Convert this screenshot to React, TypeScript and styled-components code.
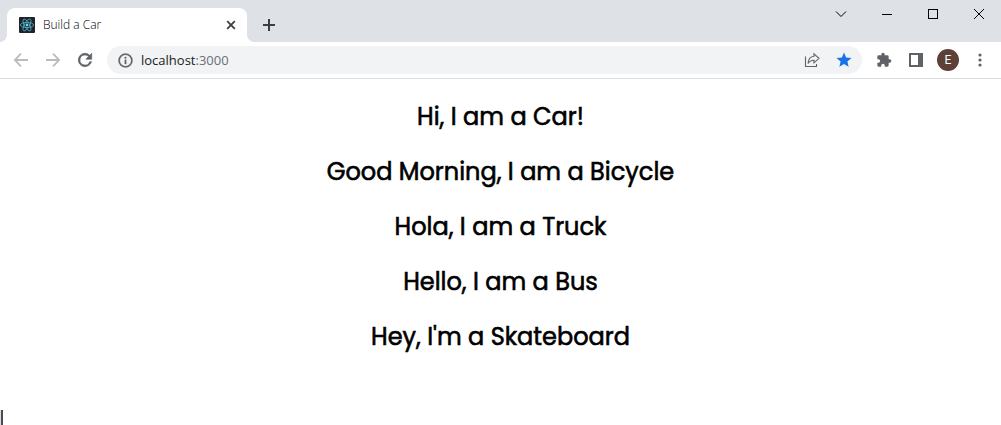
import React from 'react';
import styled, { createGlobalStyle } from 'styled-components';

const GlobalStyle = createGlobalStyle`
  * { box-sizing: border-box; }
  body { margin: 0; background: #fff; }
  button, input { font: inherit; }
`;

const Browser = styled.div`
  display: flex;
  flex-direction: column;
  min-height: 100vh;
  font-family: 'Open Sans', 'Noto Sans', sans-serif;
`;

const TabStrip = styled.header`
  display: flex;
  align-items: flex-start;
  height: 42px;
  padding-left: 7px;
  background: #dee1e6;
`;

const Tab = styled.div`
  position: relative;
  display: flex;
  align-items: center;
  gap: 8px;
  width: 240px;
  height: 34px;
  margin-top: 8px;
  padding: 0 6px 0 12px;
  border-radius: 8px 8px 0 0;
  background: #fff;

  &::before,
  &::after {
    content: '';
    position: absolute;
    bottom: 0;
    width: 8px;
    height: 8px;
  }
  &::before {
    right: 100%;
    background: radial-gradient(circle at 0 0, #dee1e6 8px, #fff 8px);
  }
  &::after {
    left: 100%;
    background: radial-gradient(circle at 100% 0, #dee1e6 8px, #fff 8px);
  }
`;

const TabTitle = styled.span`
  flex: 1;
  color: #000;
  font-size: 12px;
  font-weight: 300;
  line-height: 16px;
`;

const IconButton = styled.button<{ $size?: number; $color?: string }>`
  display: flex;
  flex: none;
  align-items: center;
  justify-content: center;
  width: ${({ $size = 32 }) => $size}px;
  height: ${({ $size = 32 }) => Math.min($size, 28)}px;
  padding: 0;
  border: 0;
  background: none;
  color: ${({ $color = '#5f6368' }) => $color};
`;

const NewTab = styled(IconButton)`
  margin: 11px 0 0 8px;
`;

const WindowControls = styled.div`
  display: flex;
  gap: 2px;
  margin-left: auto;
`;

const Toolbar = styled.nav`
  display: flex;
  align-items: center;
  height: 37px;
  padding: 0 5px;
  border-bottom: 1px solid #dadce0;
  background: #fff;
`;

const AddressBar = styled.div`
  display: flex;
  flex: 1;
  align-items: center;
  height: 28px;
  margin: 0 6px;
  padding: 0 2px;
  border-radius: 14px;
  background: #f1f3f4;
`;

const Address = styled.a`
  flex: 1;
  color: #6b6f73;
  font-size: 13px;
  line-height: 20px;
  text-decoration: none;
`;

const Host = styled.span`
  color: #202124;
`;

const Avatar = styled.span`
  display: flex;
  align-items: center;
  justify-content: center;
  width: 22px;
  height: 22px;
  border-radius: 50%;
  background: #5d4037;
  color: #fff;
  font-family: Roboto, sans-serif;
  font-size: 12px;
  line-height: 22px;
`;

const Page = styled.main`
  display: flex;
  flex: 1;
  flex-direction: column;
  align-items: center;
  padding-top: 20px;
`;

const Greeting = styled.h2`
  margin: 0 0 19px;
  color: #000;
  font-family: Poppins, Inter, sans-serif;
  font-size: 24px;
  font-weight: 400;
  line-height: 36px;
  -webkit-text-stroke: 0.025em #000;
`;

const Caret = styled.span`
  align-self: flex-start;
  width: 3px;
  height: 15px;
  margin-top: auto;
  border-left: 1px solid #dadce0;
  background: #4a4b52;
`;

const greetings = [
  'Hi, I am a Car!',
  'Good Morning, I am a Bicycle',
  'Hola, I am a Truck',
  'Hello, I am a Bus',
  "Hey, I'm a Skateboard",
];

const ReactLogo = () => (
  <svg width="16" height="16" viewBox="0 0 16 16" aria-hidden="true">
    <rect width="16" height="16" rx="1" fill="#20232a" />
    <g fill="none" stroke="#4fb3ca" strokeWidth="0.8">
      <ellipse cx="8" cy="8" rx="6.6" ry="2.6" />
      <ellipse cx="8" cy="8" rx="6.6" ry="2.6" transform="rotate(60 8 8)" />
      <ellipse cx="8" cy="8" rx="6.6" ry="2.6" transform="rotate(120 8 8)" />
    </g>
    <circle cx="8" cy="8" r="1.4" fill="#61dafb" />
  </svg>
);

const Stroke = ({ d, size, width = 1, crisp }: { d: string; size: number; width?: number; crisp?: boolean }) => (
  <svg
    width={size}
    height={size}
    viewBox={`0 0 ${size} ${size}`}
    fill="none"
    stroke="currentColor"
    strokeWidth={width}
    shapeRendering={crisp ? 'crispEdges' : undefined}
    aria-hidden="true"
  >
    <path d={d} />
  </svg>
);

const Solid = ({ d, size, outline = 0 }: { d: string; size: number; outline?: number }) => (
  <svg
    width={size}
    height={size}
    viewBox="0 0 24 24"
    fill="currentColor"
    stroke={outline ? 'currentColor' : 'none'}
    strokeWidth={outline}
    aria-hidden="true"
  >
    <path d={d} />
  </svg>
);

export default function App() {
  return (
    <Browser>
      <GlobalStyle />
      <TabStrip>
        <Tab>
          <ReactLogo />
          <TabTitle>Build a Car</TabTitle>
          <IconButton $size={20} $color="#3c4043" aria-label="Close tab">
            <Stroke size={10} width={1.8} d="M1.2 1.2 8.8 8.8M8.8 1.2 1.2 8.8" />
          </IconButton>
        </Tab>
        <NewTab $size={28} $color="#3c4043" aria-label="New tab">
          <Stroke size={12} width={2} d="M6 0v12M0 6h12" />
        </NewTab>
        <WindowControls>
          <IconButton $size={44} $color="#000" aria-label="Search tabs">
            <Stroke size={12} d="M1 3.5 6 8.5 11 3.5" />
          </IconButton>
          <IconButton $size={44} $color="#000" aria-label="Minimize">
            <Stroke size={10} crisp d="M0 5.5h10" />
          </IconButton>
          <IconButton $size={44} $color="#000" aria-label="Maximize">
            <Stroke size={10} crisp d="M.5 .5h9v9h-9z" />
          </IconButton>
          <IconButton $size={44} $color="#000" aria-label="Close">
            <Stroke size={10} d="M0 0 10 10M10 0 0 10" />
          </IconButton>
        </WindowControls>
      </TabStrip>

      <Toolbar aria-label="Browser toolbar">
        <IconButton $color="#babcbe" aria-label="Back">
          <Stroke size={16} width={1.8} d="M15 8H2M8 1.6 1.8 8 8 14.4" />
        </IconButton>
        <IconButton $color="#babcbe" aria-label="Forward">
          <Stroke size={16} width={1.8} d="M1 8H14M8 1.6 14.2 8 8 14.4" />
        </IconButton>
        <IconButton aria-label="Reload">
          <Solid
            size={20}
            outline={0.8}
            d="M17.65 6.35A7.96 7.96 0 0 0 12 4a8 8 0 1 0 7.73 10h-2.08A6 6 0 1 1 12 6c1.66 0 3.14.69 4.22 1.78L13 11h7V4z"
          />
        </IconButton>
        <AddressBar>
          <IconButton aria-label="Site information">
            <Solid
              size={17}
              outline={0.4}
              d="M11 7h2v2h-2zm0 4h2v6h-2zm1-9a10 10 0 1 0 0 20 10 10 0 0 0 0-20zm0 18a8 8 0 1 1 0-16 8 8 0 0 1 0 16z"
            />
          </IconButton>
          <Address href="http://localhost:3000">
            <Host>localhost</Host>:3000
          </Address>
          <IconButton aria-label="Share">
            <Stroke
              size={16}
              width={1.1}
              d="M1.5 4.5V14.5H12.5V12M10 1.8 15 6.3 10 10.8V8.2C7.3 8.2 5.5 9 4 11.5 4.3 7.4 6.3 4.7 10 4.3Z"
            />
          </IconButton>
          <IconButton $color="#1a73e8" aria-label="Edit bookmark">
            <Solid size={18} d="m12 17.27 6.18 3.73-1.64-7.03L22 9.24l-7.19-.61L12 2 9.19 8.63 2 9.24l5.46 4.73L5.82 21z" />
          </IconButton>
        </AddressBar>
        <IconButton aria-label="Extensions">
          <Solid
            size={16}
            d="M20.5 11H19V7a2 2 0 0 0-2-2h-4V3.5a2.5 2.5 0 0 0-5 0V5H4a2 2 0 0 0-1.99 2v3.8H3.5a2.7 2.7 0 0 1 0 5.4H2V20a2 2 0 0 0 2 2h3.8v-1.5a2.7 2.7 0 0 1 5.4 0V22H17a2 2 0 0 0 2-2v-4h1.5a2.5 2.5 0 0 0 0-5z"
          />
        </IconButton>
        <IconButton aria-label="Side panel">
          <svg width="14" height="14" viewBox="0 0 14 14" fill="currentColor" aria-hidden="true">
            <path fillRule="evenodd" d="M0 0h14v14H0zM2 2v10h7V2z" />
          </svg>
        </IconButton>
        <IconButton aria-label="Profile">
          <Avatar>E</Avatar>
        </IconButton>
        <IconButton aria-label="Menu">
          <svg width="4" height="14" viewBox="0 0 4 14" fill="currentColor" aria-hidden="true">
            <circle cx="2" cy="2" r="1.6" />
            <circle cx="2" cy="7" r="1.6" />
            <circle cx="2" cy="12" r="1.6" />
          </svg>
        </IconButton>
      </Toolbar>

      <Page>
        {greetings.map((text) => (
          <Greeting key={text}>{text}</Greeting>
        ))}
        <Caret />
      </Page>
    </Browser>
  );
}
